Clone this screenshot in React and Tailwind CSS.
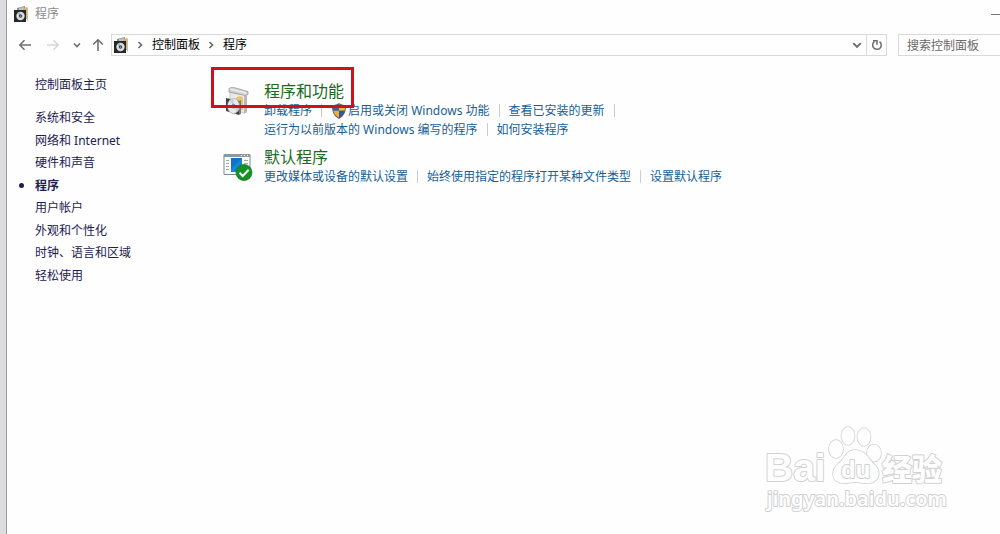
import React from 'react';

const sidebarItems = [
  '系统和安全',
  '网络和 Internet',
  '硬件和声音',
  '程序',
  '用户帐户',
  '外观和个性化',
  '时钟、语言和区域',
  '轻松使用',
];

const categories = [
  {
    title: '程序和功能',
    icon: 'features',
    rows: [
      [{ text: '卸载程序' }, { text: '启用或关闭 Windows 功能', shield: true }, { text: '查看已安装的更新', trailing: true }],
      [{ text: '运行为以前版本的 Windows 编写的程序' }, { text: '如何安装程序' }],
    ],
  },
  {
    title: '默认程序',
    icon: 'defaults',
    rows: [[{ text: '更改媒体或设备的默认设置' }, { text: '始终使用指定的程序打开某种文件类型' }, { text: '设置默认程序' }]],
  },
];

function ProgramsIcon() {
  return (
    <svg viewBox="0 0 16 16" className="h-4 w-4 shrink-0" aria-hidden="true">
      <path d="M3 2l8-2v13H3z" fill="#8a9092" />
      <path d="M5 2l5-1v4H5z" fill="#b9c3c4" />
      <path d="M10 2l3-1v12h-3z" fill="#e8ad55" />
      <path d="M13 1l1 1v12l-1 1z" fill="#bfc1bd" />
      <path d="M0 4h12v12H0z" fill="#25282b" />
      <circle cx="6.500" cy="10" r="4.200" fill="#d9dde0" />
      <path d="M6.500 10L3 7.500a4.300 4.300 0 0 1 3-1.800z" fill="#a8b4bd" />
      <circle cx="6.500" cy="10" r="1.700" fill="#3c4246" />
      <circle cx="6.500" cy="10" r=".6" fill="#d9dde0" />
    </svg>
  );
}

function FeaturesIcon() {
  return (
    <svg viewBox="0 0 26 30" className="ml-0.5 h-[30px] w-[26px]" aria-hidden="true">
      <path d="M5 5l15 3v18L5 22z" fill="#e9e9e7" stroke="#b8b8b6" strokeWidth=".7" />
      <path d="M4 1.500L7 0l16 4.500v3l-3 1L4 5z" fill="#d3d3d1" stroke="#8e8e8c" strokeWidth=".7" />
      <path d="M5 2l15 3.500v2" fill="none" stroke="#f5f5f4" />
      <path d="M19 9l3-1v17l-3 2z" fill="#b7b9b9" />
      <path d="M11 11c3-3 7-2 7 1v11h-7z" fill="#eac36c" />
      <path d="M1 11l13 3v14L1 24z" fill="#3c4043" />
      <path d="M14 14l2-1v14l-2 1z" fill="#777b7d" />
      <ellipse cx="8.500" cy="19" rx="6" ry="7.500" fill="#e8ebee" stroke="#a6abb0" strokeWidth=".7" />
      <path d="M8.500 19l-4-6a6 7 0 0 1 4-1z" fill="#c3d0dc" />
      <path d="M8.500 19l3 6a6 7 0 0 0 3-5z" fill="#cdd3d9" />
      <ellipse cx="8.500" cy="19" rx="2" ry="2.500" fill="#858b91" />
      <ellipse cx="8.500" cy="19" rx="1" ry="1.200" fill="#fff" />
    </svg>
  );
}

function DefaultsIcon() {
  return (
    <svg viewBox="0 0 30 28" className="h-7 w-[30px]" aria-hidden="true">
      <path d="M1 1.500h26v20H1z" fill="#fff" stroke="#7c8790" />
      <path d="M1 1h26v3H1z" fill="#8d989f" />
      <path d="M18 2.500h1m2 0h1m2 0h1" stroke="#fff" />
      <path d="M3 7.500h3m-3 3h3m-3 3h3m-3 3h3M21 7.500h4m-4 3h4" stroke="#a3a9ad" />
      <path d="M8 5h11v14H8z" fill="#1683dc" />
      <path d="M8 5h11L8 16z" fill="#1173c7" />
      <circle cx="21" cy="19.500" r="8" fill="#169126" stroke="#08751a" strokeWidth=".7" />
      <path d="M16.500 19.800l3.200 3.200 6-6.300" fill="none" stroke="#fff" strokeWidth="2" />
    </svg>
  );
}

function ShieldIcon() {
  return (
    <svg viewBox="0 0 16 16" className="mr-px h-4 w-4 shrink-0" aria-hidden="true">
      <path d="M8 0c2 1.500 4 2 7 2 .3 6-1.500 11-7 14C2.500 13 .700 8 1 2c3 0 5-.5 7-2z" fill="#59636e" />
      <path d="M8 1.500v6.300H2.300C2 6.500 2 5 2.200 3.300 4.500 3.300 6.300 2.800 8 1.500z" fill="#2b67b0" />
      <path d="M8 1.500v6.300h5.700c.3-1.300.3-2.800.1-4.500C11.500 3.300 9.700 2.800 8 1.500z" fill="#f2bd35" />
      <path d="M8 7.800v6.900c-3-1.700-5-4-5.700-6.900z" fill="#efb02c" />
      <path d="M8 7.800v6.900c3-1.700 5-4 5.700-6.900z" fill="#285a9d" />
    </svg>
  );
}

function Arrow({ className }) {
  return (
    <svg viewBox="0 0 12 12" className={`h-3 w-3 ${className}`} fill="none" stroke="currentColor" strokeWidth="1.600" aria-hidden="true">
      <path d="M12 6H1M5.500 1.200L.8 6l4.700 4.800" />
    </svg>
  );
}

function Chevron({ className }) {
  return (
    <svg viewBox="0 0 8 8" fill="none" stroke="currentColor" strokeWidth="1.600" className={className} aria-hidden="true">
      <path d="M1 2.500l3 3 3-3" />
    </svg>
  );
}

function NavBar() {
  return (
    <div className="flex h-[22px] items-center text-[#6c6c6c]">
      <button aria-label="后退" className="ml-3"><Arrow className="text-[#707070]" /></button>
      <button aria-label="前进" disabled className="ml-4"><Arrow className="rotate-180 text-[#d6d6d6]" /></button>
      <button aria-label="最近位置" className="ml-[14px]"><Chevron className="h-2 w-2" /></button>
      <button aria-label="上移" className="ml-[11px]"><Arrow className="rotate-90 text-[#707070]" /></button>
      <div className="ml-[7px] flex h-full flex-1 items-center border border-[#d9d9d9]">
        <nav aria-label="地址" className="flex flex-1 items-center pl-0.5 text-black">
          <ProgramsIcon />
          <Chevron className="ml-[6px] h-2 w-2 -rotate-90 text-[#666]" />
          <a href="#panel" className="ml-2">控制面板</a>
          <Chevron className="ml-[7px] h-2 w-2 -rotate-90 text-[#666]" />
          <a href="#programs" className="ml-2">程序</a>
        </nav>
        <button aria-label="展开" className="mr-1"><Chevron className="h-[10px] w-[10px]" /></button>
        <button aria-label="刷新" className="flex h-full w-5 items-center justify-center border-l border-[#d9d9d9]">
          <svg viewBox="0 0 12 12" className="h-3 w-3" fill="none" stroke="currentColor" strokeWidth="1.500" aria-hidden="true">
            <path d="M8.500 2.600A4.300 4.300 0 1 1 3.300 2.700M2 1.700h4v4" />
          </svg>
        </button>
      </div>
      <input
        type="search"
        aria-label="搜索控制面板"
        placeholder="搜索控制面板"
        className="ml-[11px] h-full w-[102px] rounded-none border-y border-l border-[#d9d9d9] bg-transparent pl-2 outline-none placeholder:text-[#6a6a6a]"
      />
    </div>
  );
}

function Sidebar() {
  return (
    <aside className="w-[216px] shrink-0 pt-[19px] text-[#1c2150]">
      <a href="#home" className="ml-7 block leading-5">控制面板主页</a>
      <ul className="mt-3 grid h-[180px] grid-rows-8">
        {sidebarItems.map((item) => {
          const active = item === '程序';
          return (
            <li key={item} className="flex items-center">
              <span className="w-7 shrink-0 pl-3">
                {active && <span className="block h-[5px] w-[5px] rounded-full bg-[#1c2150]" />}
              </span>
              <a href="#category" className={active ? 'font-bold' : ''}>{item}</a>
            </li>
          );
        })}
      </ul>
    </aside>
  );
}

function Separator() {
  return <span className="mx-[9px] h-[13px] w-px shrink-0 bg-[#cccccc]" />;
}

function Category({ title, icon, rows }) {
  return (
    <section className="flex">
      <div className="w-[41px] shrink-0 pt-[6px]">
        {icon === 'features' ? <FeaturesIcon /> : <DefaultsIcon />}
      </div>
      <div className="whitespace-nowrap">
        <h2 className="text-base leading-5 text-[#186a1c]"><a href="#open">{title}</a></h2>
        {rows.map((row, i) => (
          <div key={i} className="flex h-[19px] items-center text-[#175f96]">
            {row.map((link, j) => (
              <React.Fragment key={link.text}>
                {j > 0 && <Separator />}
                {link.shield && <ShieldIcon />}
                <a href="#task">{link.text}</a>
                {link.trailing && <Separator />}
              </React.Fragment>
            ))}
          </div>
        ))}
      </div>
    </section>
  );
}

function Watermark() {
  return (
    <svg
      viewBox="0 0 190 90"
      className="pointer-events-none absolute right-[47px] bottom-[18px] h-[90px] w-[190px]"
      fill="#fefefe"
      stroke="#d2d2d2"
      strokeWidth="2"
      strokeLinejoin="round"
      style={{ paintOrder: 'stroke' }}
      role="img"
      aria-label="Baidu 经验"
    >
      <text x="2" y="55" fontFamily="Liberation Sans" fontWeight="bold" fontSize="39">Bai</text>
      <g strokeWidth="1.600">
        <ellipse cx="73" cy="23" rx="7" ry="9" />
        <ellipse cx="85" cy="10" rx="6.500" ry="9" />
        <ellipse cx="101" cy="11" rx="6.500" ry="9" />
        <ellipse cx="111" cy="27" rx="7" ry="8.500" />
        <path d="M92 24c-9 0-10 9-17 14-7 6-7 17 3 19 5 1 9-1 14-1s10 2 15 1c10-2 11-12 5-18-7-6-9-15-20-15z" />
      </g>
      <text x="78" y="52" fontFamily="Noto Sans" fontWeight="bold" fontSize="23">du</text>
      <text x="119" y="54" fontFamily="Noto Sans CJK SC" fontWeight="900" fontSize="30">经验</text>
      <text x="4" y="80" fontFamily="Noto Sans" fontWeight="600" fontSize="20">jingyan.baidu.com</text>
    </svg>
  );
}

export default function App() {
  return (
    <div className="relative flex min-h-screen overflow-hidden bg-[#fefefe] font-['Noto_Sans','Noto_Sans_CJK_SC',sans-serif] text-xs">
      <div className="w-[7px] shrink-0 border-r border-[#9d9da1] bg-[#dddce0]" />
      <div className="min-w-0 flex-1">
        <header className="flex h-7 items-center pl-[7px] text-[#8b8b8b]">
          <ProgramsIcon />
          <h1 className="ml-[5px] flex-1">程序</h1>
          <button aria-label="最小化" className="flex h-full w-[9px] items-center">
            <span className="h-px w-full bg-[#777]" />
          </button>
        </header>
        <div className="pt-[6px]">
          <NavBar />
        </div>
        <div className="flex">
          <Sidebar />
          <main className="relative flex flex-1 flex-col gap-2 pt-[25px]">
            {categories.map((category) => (
              <Category key={category.title} {...category} />
            ))}
            <div className="pointer-events-none absolute top-[11px] -left-3 h-[41px] w-[143px] border-3 border-[#cf1219]" />
          </main>
        </div>
      </div>
      <Watermark />
    </div>
  );
}
